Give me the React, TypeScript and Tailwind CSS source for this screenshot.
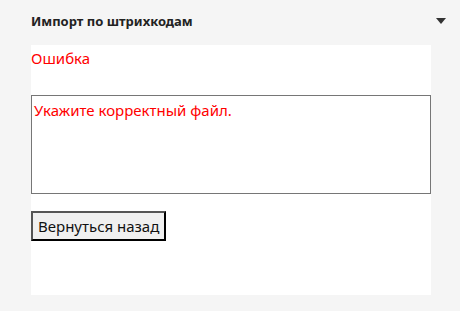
export default function App() {
  return (
    <div className="w-[460px] h-[311px] bg-[#f5f5f5] flex flex-col" style={{ fontFamily: '"Noto Sans", "Open Sans", sans-serif' }}>
      <div className="h-[45px] flex items-center justify-between pl-[31px] pr-[14px] pb-[2px]">
        <span className="text-[13px] font-bold text-[#222]">Импорт по штрихкодам</span>
        <svg width="10" height="6" viewBox="0 0 10 6" className="mt-[-1px]">
          <polygon points="0,0 10,0 5,6" fill="#333" />
        </svg>
      </div>
      <div className="ml-[31px] w-[400px] h-[250px] bg-white flex flex-col">
        <div className="text-[#ff0000] text-[15px] leading-[20px] pt-[3px] h-[50px]">Ошибка</div>
        <div className="h-[99px] border border-[#767676] px-[2px] pt-[4px] text-[#ff0000] text-[15px] leading-[20px]">
          Укажите корректный файл.
        </div>
        <div className="mt-[17px]">
          <button className="h-[30px] px-[5px] bg-[#f0f0f0] border-2 border-t-[#555] border-l-[#555] border-b-[#000] border-r-[#000] text-[15px] text-[#111] leading-none">
            Вернуться назад
          </button>
        </div>
      </div>
    </div>
  );
}
